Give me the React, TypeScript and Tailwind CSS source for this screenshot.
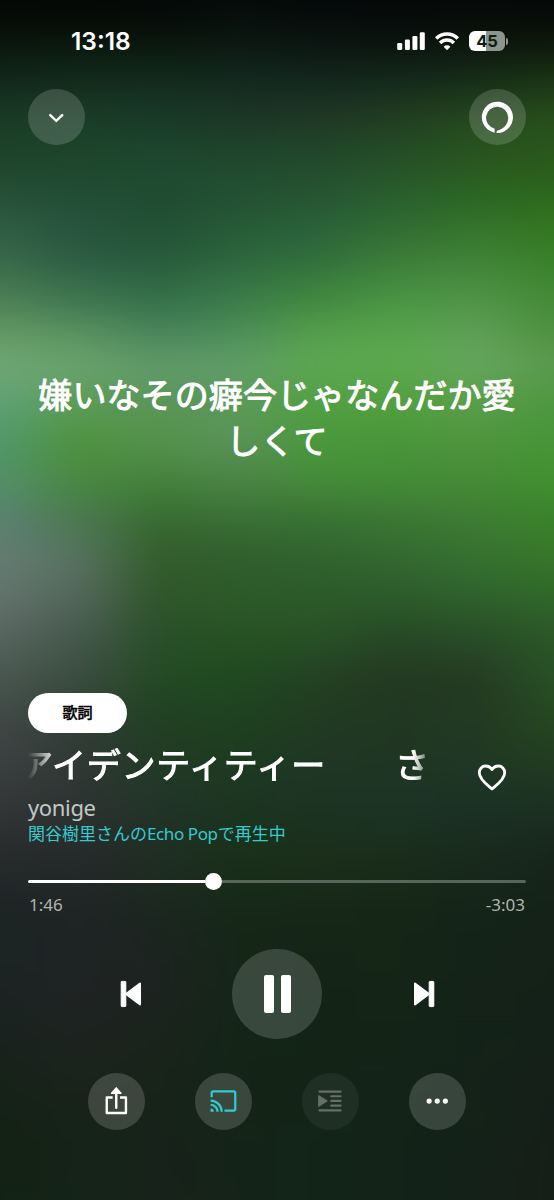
import React from "react";

// blurred album art, one row of colours per vertical stop
const artRows = [
  { y: 0, colors: ["#040707", "#040706", "#050808", "#060a0a", "#050809", "#050809", "#050809", "#050808"] },
  { y: 20, colors: ["#060c07", "#060c07", "#060c08", "#08100c", "#070d0b", "#070c0a", "#080d09", "#080c09"] },
  { y: 45, colors: ["#0b180e", "#0b180e", "#0b180e", "#0c1912", "#0b1611", "#0b150f", "#0d170d", "#0e180c"] },
  { y: 80, colors: ["#12281b", "#132b1b", "#132b1d", "#132920", "#14271f", "#14281c", "#172d19", "#1b3416"] },
  { y: 120, colors: ["#1b3c26", "#1b3e28", "#1a3b28", "#1d3826", "#203925", "#223f22", "#26491f", "#28501c"] },
  { y: 165, colors: ["#1e462b", "#1e482d", "#1e4a30", "#204a2e", "#224b2d", "#265228", "#295820", "#2a5a1c"] },
  { y: 210, colors: ["#2a563e", "#245039", "#204d32", "#255435", "#285a36", "#2c6430", "#2e6c26", "#306f1e"] },
  { y: 255, colors: ["#37674a", "#2b5a42", "#27583b", "#2b643c", "#2f6d3d", "#3a7a38", "#3f8136", "#388028"] },
  { y: 300, colors: ["#4d8055", "#3f7550", "#34704a", "#3b7c4a", "#42883f", "#4a9544", "#509448", "#448a39"] },
  { y: 335, colors: ["#659a65", "#5b9460", "#4a865a", "#4e8f59", "#57a04d", "#57a54c", "#60a058", "#50923f"] },
  { y: 365, colors: ["#70a876", "#6ba36f", "#629b6c", "#619e6c", "#5da854", "#5caa4f", "#65a75e", "#5b9a52"] },
  { y: 400, colors: ["#60a176", "#5c9d58", "#5a9559", "#5b9a57", "#52a044", "#51a03e", "#5b9f4c", "#4f9740"] },
  { y: 440, colors: ["#51976a", "#4e933f", "#55934c", "#59945a", "#4b993b", "#4a963a", "#50953e", "#469638"] },
  { y: 480, colors: ["#539068", "#498840", "#45833d", "#4c8446", "#458c3a", "#438d37", "#468b37", "#41902f"] },
  { y: 520, colors: ["#5b8172", "#4b7751", "#376a30", "#396e35", "#387133", "#3b7635", "#3d7c34", "#3b822b"] },
  { y: 560, colors: ["#657c72", "#57725f", "#335c2c", "#305e2c", "#30622d", "#33672f", "#367031", "#367629"] },
  { y: 600, colors: ["#63726d", "#526559", "#2f552b", "#2d5a2a", "#2c5a2a", "#2c5a2b", "#2e602c", "#30662a"] },
  { y: 640, colors: ["#55645e", "#44574a", "#294e2a", "#265222", "#285026", "#274725", "#284b27", "#2b5628"] },
  { y: 680, colors: ["#48564f", "#3a4b3e", "#234a22", "#204820", "#234023", "#233822", "#243a22", "#285027"] },
  { y: 720, colors: ["#404846", "#323e36", "#214024", "#1f4220", "#203b22", "#213721", "#223922", "#26481f"] },
  { y: 760, colors: ["#3c4141", "#303935", "#223b24", "#1e3b21", "#1f3724", "#203624", "#203824", "#223d22"] },
  { y: 800, colors: ["#353838", "#2e3433", "#223529", "#1c3622", "#1d3424", "#1d3426", "#1c3325", "#1d3222"] },
  { y: 860, colors: ["#262a2b", "#25292a", "#1f2e22", "#1a301a", "#1b2f1a", "#1a2d1a", "#192a1c", "#17251b"] },
  { y: 920, colors: ["#1c2424", "#1f2424", "#1b2620", "#162717", "#162617", "#152516", "#142418", "#142217"] },
  { y: 980, colors: ["#1c2424", "#202324", "#1d2321", "#152618", "#142416", "#152516", "#142318", "#142218"] },
  { y: 1060, colors: ["#18221c", "#1c231e", "#19231a", "#142517", "#132517", "#132418", "#142218", "#152119"] },
  { y: 1130, colors: ["#142214", "#162318", "#17231a", "#142417", "#132418", "#132318", "#142218", "#161f19"] },
  { y: 1260, colors: ["#122413", "#14241a", "#19221b", "#16231b", "#12241a", "#13231a", "#142118", "#171e18"] },
];

// the art bleeds past every edge so that the blur does not fade there
const BLEED = 60;

const Backdrop = () => (
  <div className="absolute inset-0 overflow-hidden">
    <div className="absolute -inset-[60px] blur-[14px]">
      {artRows.map((row, i) => {
        const top = i === 0 ? 0 : artRows[i - 1].y + BLEED;
        const end = (artRows[i + 1]?.y ?? 1260) + BLEED;
        const stops = row.colors.map((color, j) => `${color} ${BLEED + (j * 554) / 7}px`);
        const fade = `linear-gradient(to bottom, transparent 0px, black ${row.y + BLEED - top}px)`;
        return (
          <div
            key={row.y}
            className="absolute inset-x-0"
            style={{
              top,
              height: end - top,
              backgroundImage: `linear-gradient(to right, ${stops.join(", ")})`,
              maskImage: i === 0 ? undefined : fade,
            }}
          />
        );
      })}
    </div>
  </div>
);

const StatusBar = () => (
  <div className="flex h-[82px] items-center justify-between pl-[71px] pr-[46px] text-white">
    <span className="mt-px font-['Inter'] text-[24.5px] font-semibold leading-none">13:18</span>
    <div className="flex items-center">
      <svg width="28" height="18" viewBox="0 0 28 18" fill="currentColor">
        <rect x="0.2" y="11" width="5" height="7" rx="1.3" />
        <rect x="7.9" y="7.6" width="5" height="10.4" rx="1.3" />
        <rect x="15.4" y="4" width="5" height="14" rx="1.3" />
        <rect x="22.8" y="0.2" width="5" height="17.8" rx="1.3" />
      </svg>
      <svg className="ml-[10px]" width="24" height="18" viewBox="0 0 24 18" fill="none" stroke="currentColor" strokeWidth="3.5">
        <path d="M1.2 6.4a15.6 15.6 0 0 1 21.6 0" />
        <path d="M5.1 10.9a9.8 9.8 0 0 1 13.8 0" />
        <path d="M12 18.2l-3.4-3.5a4.9 4.9 0 0 1 6.8 0z" fill="currentColor" stroke="none" />
      </svg>
      <div className="ml-[10px] flex h-5 w-9 items-center justify-center rounded-[6px] bg-linear-to-r from-white from-46% to-[#8c958d] to-46% font-['Inter'] text-[16.5px] font-bold leading-none text-[#101c13]">
        45
      </div>
      <div className="ml-px h-[7px] w-[2px] rounded-r-full bg-[#8c958d]" />
    </div>
  </div>
);

const RoundButton = ({ label, dim, children }: { label: string; dim?: boolean; children: React.ReactNode }) => (
  <button
    aria-label={label}
    className={`flex size-[56.5px] items-center justify-center rounded-full text-white ${dim ? "bg-white/5" : "bg-white/16"}`}
  >
    <svg width="56.5" height="56.5" viewBox="-28.25 -28.25 56.5 56.5" fill="none">
      {children}
    </svg>
  </button>
);

const Header = () => (
  <div className="mt-[6.500px] flex justify-between pl-7 pr-[28.5px]">
    <RoundButton label="Close">
      <path d="M-6 -2.2 L0 3.6 L6 -2.2" stroke="currentColor" strokeWidth="2.4" strokeLinecap="round" />
    </RoundButton>
    <RoundButton label="Alexa">
      <path
        d="M-2.6 15.4A15.6 15.6 0 1 1 -1 15.6L-0.2 13.5C6 12 11 7.5 11 0.2A11.1 11.1 0 1 0 -2.6 11.4Z"
        fill="currentColor"
      />
    </RoundButton>
  </div>
);

const Lyrics = () => (
  <p className="mt-[227px] px-9 text-center text-[34px] leading-[46px] tracking-[0.1px] text-white [-webkit-text-stroke:1px_white]">
    嫌いなその癖今じゃなんだか愛
    <br />
    しくて
  </p>
);

const TrackInfo = () => (
  <div className="mt-[229px] px-7">
    <button className="flex h-10 w-[99px] items-center justify-center rounded-[20px] bg-white pb-[2px] text-[15px] leading-none text-black [-webkit-text-stroke:0.6px_black]">
      歌詞
    </button>
    <div className="flex h-[68px] items-start justify-between pr-[19px]">
      <div className="mt-2 w-[410px] overflow-hidden mask-r-from-94% mask-r-to-99% mask-l-from-93% mask-l-to-100%">
        <div className="-ml-[9px] flex gap-[69px] whitespace-nowrap text-[34px] leading-[48px] tracking-[0.75px] text-white [-webkit-text-stroke:1px_white]">
          <span>アイデンティティー</span>
          <span>さよ</span>
        </div>
      </div>
      <svg className="mt-[31px]" width="30" height="27" viewBox="0 0 30 27" fill="none" stroke="white" strokeWidth="2.8" strokeLinejoin="round">
        <path d="M15 25C11 21.4 2.3 15.8 2.3 8.8C2.3 4.9 5 2 8.5 2C11.3 2 13.6 3.3 15 5.6C16.4 3.3 18.7 2 21.5 2C25 2 27.7 4.9 27.7 8.8C27.7 15.8 19 21.4 15 25Z" />
      </svg>
    </div>
    <div className="-mt-[7px] text-[22px] leading-[26px] tracking-[-0.35px] text-[#c3c8c4]">yonige</div>
    <div className="mt-[2px] text-[17px] leading-[24px] text-[#36cbcd]">
      関谷樹里さんの<span className="tracking-[-0.4px]">Echo Pop</span>で再生中
    </div>
  </div>
);

const Progress = () => (
  <div className="mt-[27px] px-7">
    <div className="flex h-[17px] items-center">
      <div className="h-[3px] w-[176.5px] rounded-l-full bg-white" />
      <div className="size-[17px] rounded-full bg-white" />
      <div className="h-[3px] flex-1 rounded-r-full bg-[#586659]" />
    </div>
    <div className="mt-[3px] flex justify-between px-px text-[17px] leading-6 text-[#aeb5af]">
      <span>1:46</span>
      <span>-3:03</span>
    </div>
  </div>
);

const SkipIcon = () => (
  <svg width="22" height="28" viewBox="0 0 22 28" fill="white" stroke="white" strokeLinejoin="round">
    <rect x="1.2" y="1.4" width="4.6" height="25.2" rx="0.6" />
    <path d="M20 3.6V24.4L6 14Z" strokeWidth="2" />
  </svg>
);

const Controls = () => (
  <div className="mt-[32px] flex items-center justify-between px-[119.5px]">
    <button aria-label="Previous">
      <SkipIcon />
    </button>
    <button aria-label="Pause" className="flex size-[90px] items-center justify-center gap-[7px] rounded-full bg-white/16">
      <span className="h-[38px] w-[10px] rounded-[2px] bg-white" />
      <span className="h-[38px] w-[10px] rounded-[2px] bg-white" />
    </button>
    <button aria-label="Next" className="rotate-180">
      <SkipIcon />
    </button>
  </div>
);

const Actions = () => (
  <div className="mt-[34px] flex justify-between px-[88.2px]">
    <RoundButton label="Share">
      <path d="M-3.6 -3.7H-9.5V11.7H9.7V-3.7H3.8" stroke="currentColor" strokeWidth="2.4" strokeLinejoin="round" />
      <path d="M0 -8V6.5" stroke="currentColor" strokeWidth="2.4" strokeLinecap="round" />
      <path d="M0 -13.4L4.7 -8H-4.7Z" fill="currentColor" stroke="currentColor" strokeWidth="1.4" strokeLinejoin="round" />
    </RoundButton>
    <RoundButton label="Cast">
      <g className="stroke-[#33cbd0]" strokeWidth="2.2">
        <path d="M-11.6 -4V-8.2Q-11.6 -9.8 -10 -9.8H10.4Q12 -9.8 12 -8.2V7.8Q12 9.4 10.4 9.4H1.2" />
        <path d="M-12.6 -0.6A11 11 0 0 1 -1.6 10.4" />
        <path d="M-12.6 3.5A6.9 6.9 0 0 1 -5.7 10.4" />
      </g>
      <path d="M-12.6 7.3A3.2 3.2 0 0 1 -9.4 10.5H-12.6Z" className="fill-[#33cbd0]" />
    </RoundButton>
    <RoundButton label="Queue" dim>
      <g className="fill-[#657067] stroke-[#657067]" strokeWidth="2.2" strokeLinecap="round">
        <path d="M-10.8 -9.7H10.3M1 -5H10.3M1 -0.3H10.3M1 4.4H10.3M-10.8 9.1H10.3" />
        <path d="M-11.3 -5.5L-3 -0.3L-11.3 5Z" strokeWidth="1" strokeLinejoin="round" />
      </g>
    </RoundButton>
    <RoundButton label="More">
      <circle cx="-8.1" cy="-0.2" r="2.6" fill="currentColor" />
      <circle cx="0" cy="-0.2" r="2.6" fill="currentColor" />
      <circle cx="8.1" cy="-0.2" r="2.6" fill="currentColor" />
    </RoundButton>
  </div>
);

const App = () => {
  return (
    <div
      lang="ja"
      className="relative h-[1200px] w-[554px] overflow-hidden bg-[#132318] font-['Noto_Sans','Noto_Sans_CJK_JP',sans-serif]"
    >
      <Backdrop />
      <div className="relative flex flex-col">
        <StatusBar />
        <Header />
        <Lyrics />
        <TrackInfo />
        <Progress />
        <Controls />
        <Actions />
      </div>
    </div>
  );
};

export default App;
